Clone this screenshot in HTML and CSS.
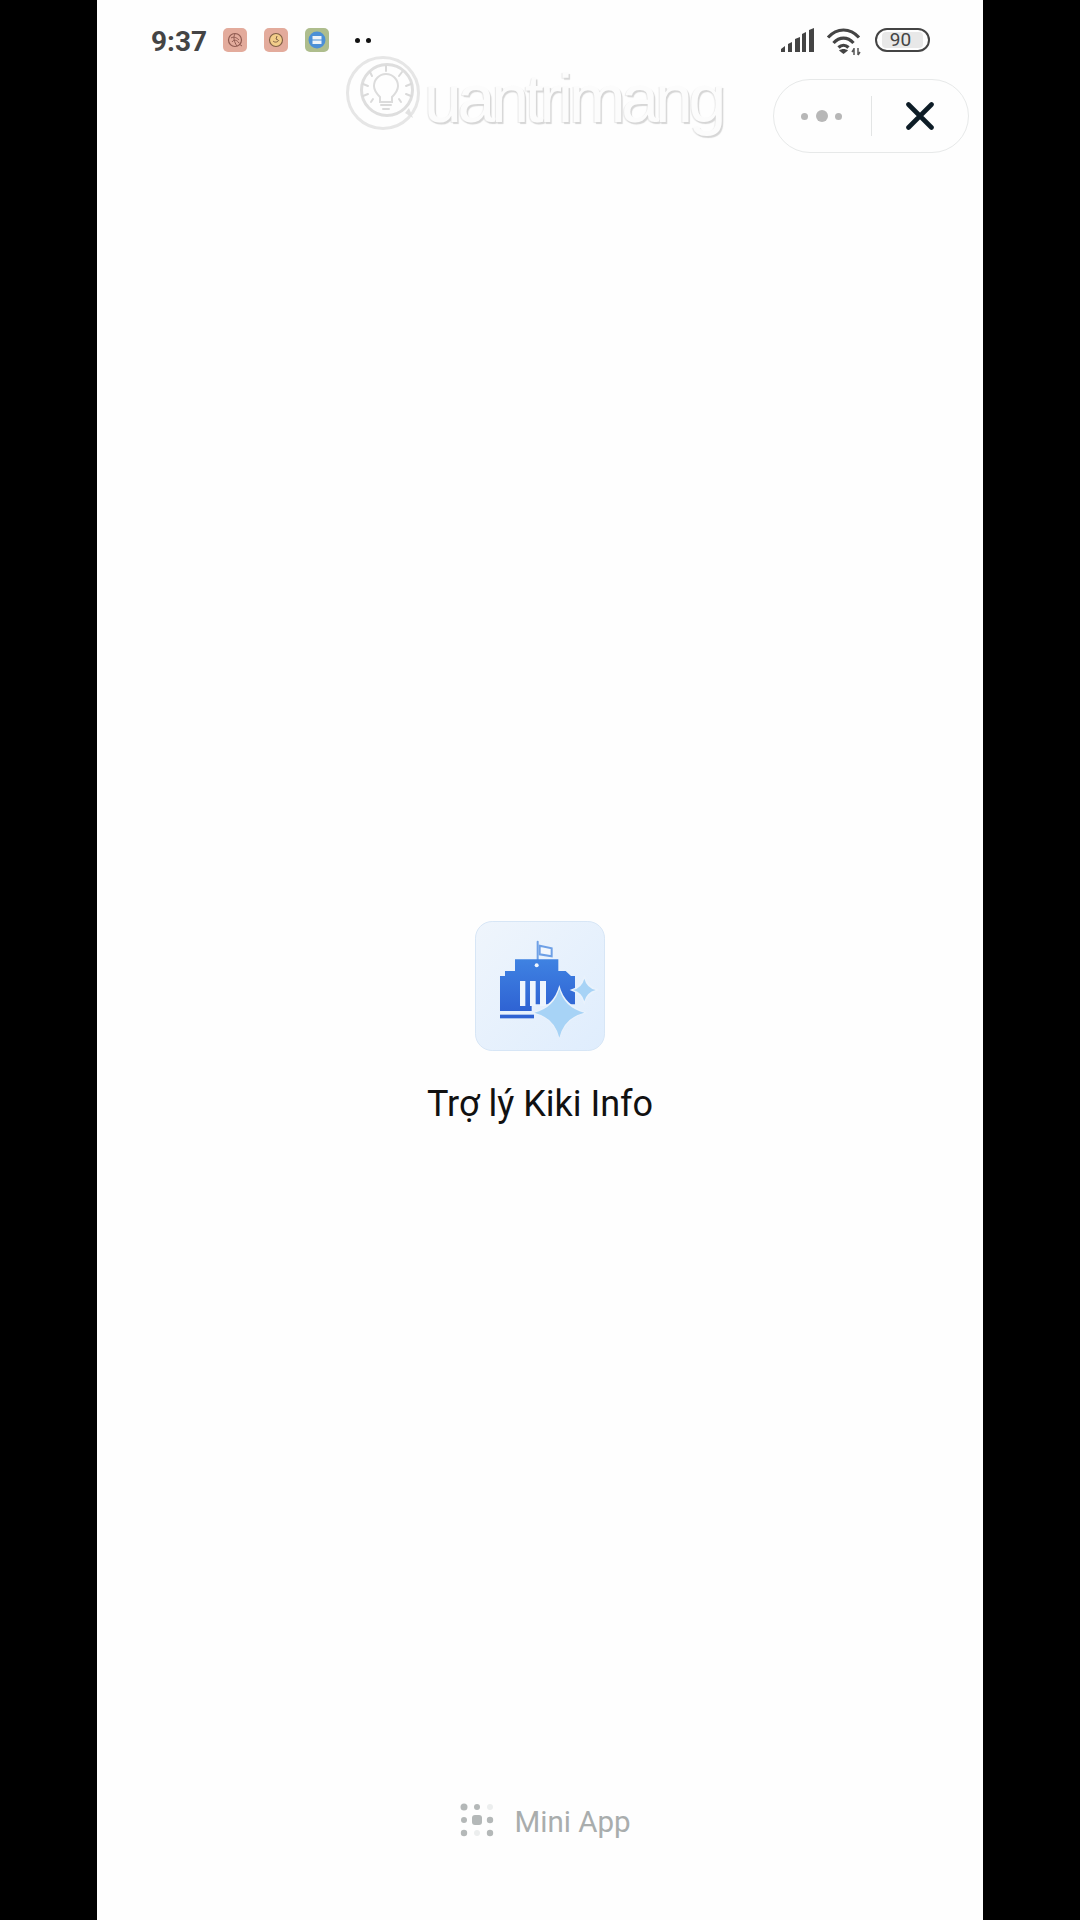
FILE: index.html
```html
<!DOCTYPE html>
<html lang="vi">
<head>
<meta charset="utf-8">
<title>Trợ lý Kiki Info</title>
<link rel="stylesheet" href="styles.css">
</head>
<body>
<div class="phone">
  <div class="watermark" aria-hidden="true">
    <svg class="wm-logo" viewBox="0 0 76 78" width="76" height="78">
      <circle cx="37" cy="39" r="35.500" fill="none" stroke="#e6e6e6" stroke-width="3"/>
      <circle cx="41" cy="36" r="25.500" fill="none" stroke="#dedede" stroke-width="3"/>
      <path d="M59 59l8 5-4-10z" fill="#e2e2e2"/>
      <path d="M34 43c-3-3-6-6-6-11a12 12 0 0 1 24 0c0 5-3 8-6 11v5H34z" fill="none" stroke="#dcdcdc" stroke-width="2"/>
      <path d="M35 51h10M37 55h6M24 18l2 4M40 12v5M56 18l-3 4M65 30l-5 2M65 42l-5-2M17 30l5 2M17 42l5-2M25 48l2-3M55 48l-2-3" stroke="#dadada" stroke-width="2" stroke-linecap="round" fill="none"/>
    </svg>
    <span class="wm-text">uantrimang</span>
  </div>

  <header class="status">
    <div class="status-left">
      <span class="time">9:37</span>
      <div class="notifs">
        <svg class="notif" viewBox="0 0 24 24" width="24" height="24"><rect width="24" height="24" rx="5" fill="#e3ab9c"/><circle cx="12" cy="12" r="6.500" fill="none" stroke="#8f5a50" stroke-width="1.200"/><path d="M8 10c3-2 6 0 8 2M9 14c2-3 5-2 7 1M12 6c-2 3-1 8 2 12M16 16l3 2" fill="none" stroke="#8f5a50" stroke-width="1"/></svg>
        <svg class="notif" viewBox="0 0 24 24" width="24" height="24"><rect width="24" height="24" rx="5" fill="#e3ab9c"/><circle cx="12" cy="12" r="6.500" fill="#f2cd8a" stroke="#7f5f45" stroke-width="1.100"/><path d="M9 13c2 2 5 1 6-1M13 8l-1 3 2 1" fill="none" stroke="#7f5f45" stroke-width="1"/></svg>
        <svg class="notif" viewBox="0 0 24 24" width="24" height="24"><rect width="24" height="24" rx="5" fill="#aebd8d"/><circle cx="12" cy="12" r="8.500" fill="#4b8fd6"/><rect x="7.500" y="8" width="9" height="3.500" fill="#eef3f8"/><rect x="7.500" y="12.500" width="9" height="3.500" fill="#eef3f8"/></svg>
      </div>
      <div class="more-notifs"><i></i><i></i></div>
    </div>
    <div class="status-right">
      <svg viewBox="0 0 33 24" width="33" height="24" class="signal">
        <path d="M0 24v-3l4-3v6zM7 24v-8l4-2v10zM14 24V11l5-2v15zM21 24V6l4-2v20zM28 24V2l5-2v24z" fill="#444"/>
      </svg>
      <svg viewBox="0 0 36 28" width="36" height="28" class="wifi">
        <path d="M2 9.500C11-.5 24-.5 33 9.500M7.500 15c6-6.500 14-6.500 20 0M12.500 19.500c3-3 7-3 10 0" fill="none" stroke="#444" stroke-width="3.200"/>
        <path d="M17.500 26l-4.500-3.500c2.500-2 6.500-2 9 0z" fill="#444"/>
        <path d="M28 20v7M32 20v7M26 24l2-3M34 24l-2 3" stroke="#555" stroke-width="1.500" fill="none"/>
      </svg>
      <div class="battery"><span class="battery-level">90</span></div>
    </div>
  </header>

  <div class="toolbar">
    <div class="capsule">
      <div class="capsule-more"><i></i><b></b><i></i></div>
      <span class="capsule-sep"></span>
      <svg class="capsule-close" viewBox="0 0 28 28" width="28" height="28"><path d="M2.500 2.500l23 23M25.500 2.500l-23 23" stroke="#0d1c26" stroke-width="4.600" stroke-linecap="round"/></svg>
    </div>
  </div>

  <main class="splash">
    <svg class="app-icon" viewBox="30 30 390 390" width="130" height="130">
      <defs>
        <linearGradient id="bg" x1="0" y1="0" x2="1" y2="1"><stop offset="0" stop-color="#eff5fc"/><stop offset="1" stop-color="#dfedfd"/></linearGradient>
        <linearGradient id="bld" x1="0" y1="0" x2="0" y2="1"><stop offset="0" stop-color="#3f82e2"/><stop offset="1" stop-color="#2f63d3"/></linearGradient>
      </defs>
      <rect x="31.500" y="31.500" width="387" height="387" rx="50" fill="url(#bg)" stroke="#d7e6f6" stroke-width="3"/>
      <path d="M218 150V92" stroke="#6ea0e6" stroke-width="6" stroke-linecap="round"/>
      <path d="M224 104l36 8v24l-36-6z" fill="#f2f7fd" stroke="#6ea0e6" stroke-width="6"/>
      <path d="M105 300V195h15v-15h30v-35h130v35h22l16 15h12v85h-130v20z" fill="url(#bld)"/>
      <circle cx="215" cy="163" r="6" fill="#f0f6fd"/>
      <path d="M165 210h16v75h-16zM195 210h17v75h-17zM225 210h18v75h-18z" fill="#eef5fd"/>
      <rect x="105" y="311" width="102" height="11" fill="#2f63d3"/>
      <path d="M283 222Q298 285 366 305 300 322 283 384 266 322 200 305 268 285 283 222z" fill="#e9f2fc"/>
      <path d="M283 234Q298 290 358 305 298 320 283 380 268 320 208 305 268 290 283 234z" fill="#a7d3f6"/>
      <path d="M358 192Q366 226 402 237 366 248 358 282 350 248 314 237 350 226 358 192z" fill="#e9f2fc"/>
      <path d="M358 203Q365 230 392 237 365 244 358 271 351 244 324 237 351 230 358 203z" fill="#a7d3f6"/>
    </svg>
    <h1 class="app-name">Trợ lý Kiki Info</h1>
  </main>

  <footer class="brand">
    <svg class="brand-mark" viewBox="0 0 36 34" width="36" height="34">
      <g fill="#b4b8b8">
        <circle cx="5" cy="4" r="3.500"/><circle cx="18" cy="4" r="3"/><circle cx="31" cy="4" r="3" fill="#eceeee"/>
        <circle cx="5" cy="17" r="3"/><rect x="13" y="12" width="10" height="10" rx="3"/><circle cx="31" cy="17" r="3.200"/>
        <circle cx="5" cy="30" r="3.200"/><circle cx="18" cy="30" r="3" fill="#eceeee"/><circle cx="31" cy="30" r="3.200"/>
      </g>
    </svg>
    <span class="brand-text">Mini App</span>
  </footer>
</div>
</body>
</html>
```

FILE: styles.css
```css
* { box-sizing: border-box; }

html, body {
  margin: 0;
  height: 100%;
  background: #000;
}

body {
  font-family: Roboto, "Noto Sans", sans-serif;
}

.phone {
  position: relative;
  width: 886px;
  height: 1920px;
  margin: 0 auto;
  background: #fefefe;
  display: flex;
  flex-direction: column;
  overflow: hidden;
}

.status {
  display: flex;
  justify-content: space-between;
  align-items: flex-start;
  height: 52px;
  padding: 28px 53px 0 54px;
}

.status-left,
.status-right {
  display: flex;
  align-items: center;
  height: 24px;
}

.time {
  font-weight: 700;
  font-size: 28px;
  line-height: 24px;
  color: #444;
  width: 72px;
  margin-top: 4px;
}

.notifs {
  display: flex;
  gap: 17px;
}

.notif { display: block; }

.more-notifs {
  display: flex;
  gap: 6px;
  margin-left: 26px;
}

.more-notifs i {
  width: 5px;
  height: 5px;
  border-radius: 50%;
  background: #111;
}

.status-right { gap: 13px; }

.signal { margin-right: -1px; }

.wifi { margin-top: 3px; }

.battery {
  width: 55px;
  height: 24px;
  border: 2.5px solid #444;
  border-radius: 12px;
  padding: 2px 5px;
  display: flex;
}

.battery-level {
  flex: 1;
  background: #e8e8e8;
  border-radius: 4px;
  padding-right: 4px;
  text-align: center;
  font-size: 19px;
  line-height: 15px;
  color: #444;
}

.toolbar {
  display: flex;
  justify-content: flex-end;
  padding: 27px 14px 0 0;
}

.capsule {
  width: 196px;
  height: 74px;
  border: 1.5px solid #e7e9e9;
  border-radius: 37px;
  display: flex;
  align-items: center;
  padding-left: 27px;
  background: #fefefe;
}

.capsule-more {
  display: flex;
  align-items: center;
  gap: 7.5px;
  width: 69.5px;
}

.capsule-more i {
  width: 7px;
  height: 7px;
  border-radius: 50%;
  background: #b7b7b7;
}

.capsule-more b {
  width: 12px;
  height: 12px;
  border-radius: 50%;
  background: #b7b7b7;
}

.capsule-sep {
  width: 1px;
  height: 40px;
  background: #e3e5e5;
}

.capsule-close {
  margin-left: 34px;
}

.splash {
  display: flex;
  flex-direction: column;
  align-items: center;
  padding-top: 768px;
  flex: 1;
}

.app-icon { display: block; }

.app-name {
  margin: 30px 0 0;
  font-size: 36px;
  font-weight: 400;
  line-height: 46px;
  color: #111;
}

.brand {
  display: flex;
  align-items: center;
  justify-content: center;
  gap: 19px;
  padding: 0 0 78px 10px;
}

.brand-mark {
  display: block;
  margin-bottom: 5px;
}

.brand-text {
  font-size: 29.5px;
  line-height: 40px;
  color: #a9adad;
}

.watermark {
  position: absolute;
  left: 249px;
  top: 54px;
  display: flex;
  align-items: flex-start;
  pointer-events: none;
}

.wm-logo { display: block; }

.wm-text {
  margin: 5px 0 0 2px;
  font-family: "Liberation Sans", sans-serif;
  font-size: 68px;
  line-height: 78px;
  letter-spacing: -4.200px;
  color: #fcfcfc;
  text-shadow: 1.500px 1.500px 1px #d6d6d6, -1px 1px 1px #e8e8e8;
}
```
